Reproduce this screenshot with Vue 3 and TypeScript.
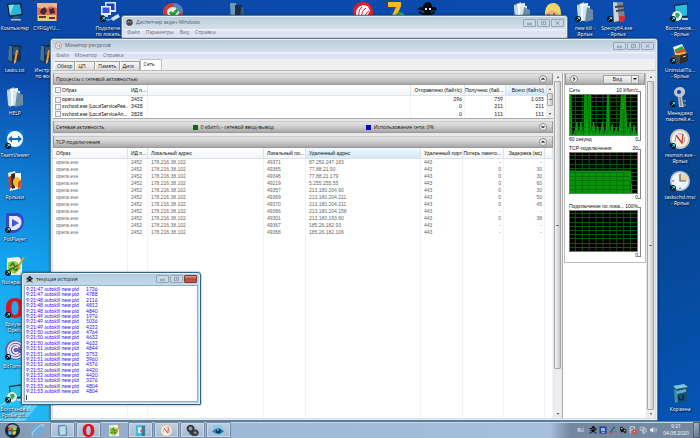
<script setup lang="ts">
import { ref } from 'vue'

interface Shape {
  d: string
  f?: string
  s?: string
  w?: number
}

interface DesktopItem {
  col: number
  row: number
  icon: string
  label: string
  link?: boolean
}

const art: Record<string, Shape[]> = {
  computer: [
    { d: 'M2 2 L16 1 L18 13 L4 15Z', f: '#0b1822' },
    { d: 'M3.500 3 L15 2.200 L16.600 12 L5 13.600Z', f: '#25b7dc' },
    { d: 'M3.500 3 L9 2.600 L5 13Z', f: '#7fe3f2' },
    { d: 'M9 14 H13 L15 18 H7Z', f: '#3b5468' },
    { d: 'M6 17 H16 V18.500 H6Z', f: '#a9c3d3' },
  ],
  photo: [
    { d: 'M0 1 H20 V19 H0Z', f: '#e26a50' },
    { d: 'M0 1 H20 V6 L13 4 L7 8 L0 5Z', f: '#f0b58c' },
    { d: 'M1 13 H19 V19 H1Z', f: '#dfc98d' },
    { d: 'M4 7 L8 5 L10 9 L7 13 L3 11Z M12 7 L17 6 L18 11 L13 12Z', f: '#3b2a33' },
    { d: 'M2 15 H9 M12 16 H18', s: '#6d3128', w: 2 },
  ],
  network: [
    { d: 'M5 0 H16 V10 H5Z', f: '#d9e7f7' },
    { d: 'M6.500 1.500 H14.500 V8 H6.500Z', f: '#213ec1' },
    { d: 'M1 4 H11 V13 H1Z', f: '#eaf2fb' },
    { d: 'M2.500 5.500 H9.500 V11 H2.500Z', f: '#3454dd' },
    { d: 'M4 13 H8 V15 H3Z', f: '#c5d3e2' },
    { d: 'M11 16 L18 12 L20 15 L13 19Z', f: '#cfe0ee' },
    { d: 'M3 16 Q8 20 13 16', s: '#9ed4ef', w: 1 },
  ],
  note: [
    { d: 'M4 1 H15 Q17 2 16 5 V17 L6 19 L3 17Z', f: '#17324f' },
    { d: 'M4 2 H7 V18 L3 16Z', f: '#3f739b' },
    { d: 'M8 3 H14 V10 L8 11Z', f: '#25527b' },
    { d: 'M12 6 L10 18', s: '#f39b2c', w: 2 },
    { d: 'M10 17 L9.500 19.500', s: '#f6dfb2', w: 1 },
  ],
  folder: [
    { d: 'M2 3 L9 0 L11 17 L4 20Z', f: '#9eb9c8' },
    { d: 'M5 2 L13 1 V17 L6 19Z', f: '#f5fafc' },
    { d: 'M8 3 L15 4 V18 L8 19Z', f: '#d7e4eb' },
    { d: 'M12 5 L18 8 V18 L10 20Z', f: '#6b8ca1' },
    { d: 'M2 3 L6 5 V20 L3 18Z', f: '#c3d9e4' },
  ],
  darkfolder: [
    { d: 'M3 1 H9 L11 19 L4 20Z', f: '#6e99b4' },
    { d: 'M8 3 H15 V18 L8 20Z', f: '#1b2d43' },
    { d: 'M14 5 L17 7 V17 L13 19Z', f: '#345a7e' },
  ],
  teamviewer: [
    { d: 'M1 1 H19 V19 H1Z', f: '#1370c8' },
    { d: 'M10 2 A8 8 0 1 1 9.990 2Z', f: '#f6fbff' },
    { d: 'M3 10 L7 6.500 V9 H13 V6.500 L17 10 L13 13.500 V11 H7 V13.500Z', f: '#136cc1' },
  ],
  shortcuts: [
    { d: 'M3 2 L10 0 L12 18 L5 20Z', f: '#e9f2f5' },
    { d: 'M3 6 L9 4 V16 L4 18Z', f: '#b74a32' },
    { d: 'M9 2 H16 V17 L9 19Z', f: '#f5f7f8' },
    { d: 'M6 3 L10 2 V17 L7 18Z', f: '#3a2a26' },
    { d: 'M12 6 A4 5 0 1 1 11.990 6Z', f: '#f2bd28' },
    { d: 'M13 11 L17 8 V16 L13 18Z', f: '#d94b2b' },
  ],
  pot: [
    { d: 'M1 0 H13 Q19 2 19 9 Q18 18 9 20 H4 Q1 19 1 15Z', f: '#3848c9' },
    { d: 'M4 3 H12 Q17 5 16.500 10 Q16 15 10 17 H4Z', f: '#e4eafc' },
    { d: 'M7 6 L14 10 L7 14Z', f: '#4156d4' },
  ],
  notepad: [
    { d: 'M2 2 L14 1 L17 5 V19 H2Z', f: '#edf2e6' },
    { d: 'M3 7 Q8 3 13 7 L16 12 L10 18 L3 15Z', f: '#92ce39' },
    { d: 'M5 10 L8 7 L10 11 L14 9 M4 14 L8 12 L11 15', s: '#3c6a2b', w: 1.5 },
    { d: 'M19 1 L12 13', s: '#d59a35', w: 2 },
    { d: 'M12.500 12 L11 15', s: '#392d20', w: 1 },
  ],
  opera: [
    { d: 'M10 0 C16 0 19 4 19 10 S16 20 10 20 S1 16 1 10 S4 0 10 0Z M10 3 C7 3 6.500 7 6.500 10 S7 17 10 17 S13.500 13 13.500 10 S13 3 10 3Z', f: '#dc1420' },
  ],
  bit: [
    { d: 'M10 0 A10 10 0 1 1 9.990 0Z', f: '#6861a8' },
    { d: 'M17 5 A8 8 0 1 0 17 15 M15 7 A5.500 5.500 0 1 0 15 13', s: '#e8e7f8', w: 1.700 },
    { d: 'M13 8 A3 3 0 1 0 13 12', s: '#fff', w: 1.300 },
  ],
  restore: [
    { d: 'M4 3 L18 1 V15 L5 16Z', f: '#122c39' },
    { d: 'M5 4 L17 2.500 V13.500 L6 14.500Z', f: '#28bde1' },
    { d: 'M7 9 A5 5 0 1 1 6.990 9Z', f: '#dff4e6' },
    { d: 'M5 12 Q8 9 10 13 L7 17Z', f: '#32a358' },
    { d: 'M12 16 H18 V18 H12Z', f: '#b8cbd4' },
  ],
  uninstall: [
    { d: 'M3 3 L12 0 L17 10 H5Z', f: '#e9f2f5' },
    { d: 'M4 6 L12 2 L18 10 H7Z', f: '#39a43d' },
    { d: 'M5 8 L14 5 L18 11 H8Z', f: '#e5472f' },
    { d: 'M4 10 L15 8 L18 12 H7Z', f: '#f2c23e' },
    { d: 'M2 11 H10 L18 9 V17 L10 20 H2Z', f: '#4d4a49' },
    { d: 'M10 11 L18 9 V17 L10 20Z', f: '#2d2b2c' },
    { d: 'M13 13 L16 12', s: '#d9c79f', w: 1 },
  ],
  key: [
    { d: 'M9 0 C14 -1 17 4 14 8 L12 10 L14 20 L9 20 L8 10 C2 8 3 1 9 0Z M9 3 A2 2 0 1 0 9.010 3Z', f: '#bdc4ca' },
    { d: 'M10 10 L11 19 M12 14 H16 M13 18 H16', s: '#7d858e', w: 1.500 },
  ],
  gauge: [
    { d: 'M10 0 A10 10 0 1 1 9.990 0Z', f: '#c9c5bc' },
    { d: 'M10 2 A8 8 0 1 1 9.990 2Z', f: '#f4f0e6' },
    { d: 'M5 13 L6 7 M8 5 L13 5 M15 8 L14 14', s: '#a59b93', w: 1 },
    { d: 'M6 6 L12 14 L13 5', s: '#cc3328', w: 1.300 },
  ],
  clock: [
    { d: 'M10 0 A10 10 0 1 1 9.990 0Z', f: '#aebecb' },
    { d: 'M10 1.500 A8.500 8.500 0 1 1 9.990 1.500Z', f: '#eef5f8' },
    { d: 'M10 2 A8 8 0 0 1 18 10 H10Z', f: '#ead7a2' },
    { d: 'M10 3 V10 H16', s: '#50647a', w: 1.200 },
    { d: 'M2 10 H4 M10 16 V18', s: '#50647a', w: 1 },
  ],
  bin: [
    { d: 'M3 3 L14 1 L18 4 L16 19 L5 20Z', f: '#17516f' },
    { d: 'M3 3 L14 1 L18 4 L6 6Z', f: '#7bc5de' },
    { d: 'M4 6 L7 7 L8 19 L5 20Z', f: '#3f91b2' },
    { d: 'M7 8 L16 6 V9 L7 11Z', f: '#65aeca' },
    { d: 'M9 13 A2.500 2.500 0 1 0 12 12', s: '#0a2a43', w: 1.500 },
  ],
  check: [
    { d: 'M10 1 C17 1 20 6 20 10 C20 16 16 20 10 20 C4 20 0 16 0 10 C0 5 4 1 10 1Z', f: '#d23b32' },
    { d: 'M10 1 C17 1 20 6 20 10 L13 14Z', f: '#4d83d1' },
    { d: 'M10 5 A6 5 0 1 1 9.990 5Z', f: '#e3eee2' },
    { d: 'M7 10 L10 13 L15 7', s: '#2ba02f', w: 3 },
  ],
  fan: [
    { d: 'M10 0 A10 10 0 1 1 9.990 0Z', f: '#e51c2a' },
    { d: 'M3 14 Q2 5 10 3 Q16 3 17 9 L14 14 L9 17Z', f: '#fff' },
    { d: 'M6 15 Q5 8 9 5 M9 15 Q8 9 13 6 M12 15 Q12 11 16 9', s: '#e51c2a', w: 1 },
  ],
  seven: [
    { d: 'M3 0 H16 V4 L9 20 H4 L11 5 H3Z', f: '#f3bd1e' },
    { d: 'M15 10 A5 5 0 1 1 14.990 10Z', f: '#2e9a68' },
    { d: 'M12 14 L18 12 L16 17Z', f: '#70cbe0' },
  ],
  skull: [
    { d: 'M0 7 Q4 4 6 5 Q7 0 11 0 Q15 0 15 5 Q19 4 20 8 L14 9 L13 14 H8 L7 9Z', f: '#080b10' },
    { d: 'M1 18 L18 10 M19 18 L2 10', s: '#080b10', w: 2 },
    { d: 'M8 6 H10 V8 H8Z M12 6 H14 V8 H12Z', f: '#e4e8ea' },
  ],
  blonde: [
    { d: 'M2 10 Q3 0 12 1 Q18 3 18 12 L20 18 L13 19 L2 17Z', f: '#efd36b' },
    { d: 'M2 12 L9 8 L15 11 L13 20 L3 18Z', f: '#e9ad82' },
    { d: 'M4 13 H7 M10 12 H12', s: '#362821', w: 1 },
  ],
  chip: [
    { d: 'M6 0 L16 0 L18 17 L7 20Z', f: '#7b858d' },
    { d: 'M6 0 L10 1 L12 19 L7 20Z', f: '#cdd2d6' },
    { d: 'M8 5 L17 4 M9 9 L17 8', s: '#3e464d', w: 2 },
    { d: 'M12 14 H18 L17 20 H12Z', f: '#d92f2a' },
  ],
  start: [
    { d: 'M10 0 A10 10 0 1 1 9.990 0Z', f: '#1b2938' },
    { d: 'M3 5 Q10 -2 17 5 Q10 9 3 5Z', f: '#9aa6b0' },
    { d: 'M5 6 L9 5 V10 L4 10Z', f: '#f06d25' },
    { d: 'M10 5 Q13 7 16 5 L15 10 H10Z', f: '#94d24e' },
    { d: 'M4 11 H9 V15 L5 16Z', f: '#4fb9ed' },
    { d: 'M10 11 H15 L14 15 L10 16Z', f: '#f7c63c' },
  ],
  ie: [
    { d: 'M16 14 A7 7 0 1 1 17 10 H6', s: '#5db4e4', w: 3 },
    { d: 'M3 18 Q-1 17 6 9 Q15 0 19 1 Q20 2 18 5', s: '#b2e3f6', w: 1.500 },
  ],
  explorer: [
    { d: 'M3 2 L14 1 L17 4 V18 L6 19 L3 17Z', f: '#5f8fad' },
    { d: 'M5 4 L15 3 V16 L6 17Z', f: '#b8d9e9' },
  ],
  book: [
    { d: 'M3 2 H13 V18 L3 19Z', f: '#40b9df' },
    { d: 'M6 5 H12 V14 H6Z', f: '#d8f3fc' },
    { d: 'M12 3 L17 2 V18 L12 19Z', f: '#347e9d' },
    { d: 'M10 8 H13 V13 H10Z', f: '#d45742' },
  ],
  gears: [
    { d: 'M7 1 A6 6 0 1 1 6.990 1Z', f: '#2d343b' },
    { d: 'M7 4 A3 3 0 1 1 6.990 4Z', f: '#929ba3' },
    { d: 'M14 8 A5.500 5.500 0 1 1 13.990 8Z', f: '#333b41' },
    { d: 'M14 11 A2.500 2.500 0 1 1 13.990 11Z', f: '#8c949b' },
    { d: 'M6 12 L12 17', s: '#343b42', w: 5 },
  ],
  eye: [
    { d: 'M2 2 H15 L18 16 H4Z', f: '#7ccbe8' },
    { d: 'M0 11 Q9 3 19 11 Q9 19 0 11Z', f: '#1c86bd' },
    { d: 'M10 7 A4 4 0 1 1 9.990 7Z', f: '#0d3c5e' },
    { d: 'M8 8 H10 V10 H8Z', f: '#fff' },
  ],
  monitor: [
    { d: 'M1 1 H19 V19 H1Z', f: '#25439d' },
    { d: 'M5 5 H15 V13 H5Z', f: '#9bb5df' },
    { d: 'M7 16 H14', s: '#d8e3fa', w: 2 },
  ],
  pens: [
    { d: 'M2 18 L14 2', s: '#2354d1', w: 4 },
    { d: 'M5 18 L18 5', s: '#45b34c', w: 4 },
    { d: 'M2 18 L18 12', s: '#e3462f', w: 3 },
  ],
  cow: [
    { d: 'M2 4 L8 1 L12 6 L18 9 V16 L14 18 L11 14 L7 17 L3 12Z', f: '#15191e' },
    { d: 'M4 6 L8 4 L9 8Z M12 9 L16 11 L14 14Z', f: '#f4f5f5' },
  ],
  flag: [
    { d: 'M3 1 V19 M4 2 H14 V10 H4', s: '#e6edf5', w: 2 },
    { d: 'M14 8 A6 6 0 1 1 13.990 8Z', f: '#dc4031' },
    { d: 'M12 12 L16 16 M16 12 L12 16', s: '#fff', w: 1.500 },
  ],
  lan: [
    { d: 'M3 3 H13 V11 H3Z M9 7 H18 V15 H9Z', f: '#7688a0', s: '#e0e7ef', w: 1.500 },
    { d: 'M8 18 H15', s: '#e0e7ef', w: 2 },
  ],
  speaker: [
    { d: 'M3 7 H7 L11 3 V17 L7 13 H3Z', f: '#f3f6f9' },
    { d: 'M14 6 Q17 10 14 14 M17 4 Q21 10 17 16', s: '#dbe4ee', w: 1.300 },
  ],
}

const items: DesktopItem[] = [
  { col: 1, row: 1, icon: 'computer', label: 'Компьютер' },
  { col: 1, row: 2, icon: 'note', label: 'tasks.txt' },
  { col: 1, row: 3, icon: 'folder', label: 'HELP' },
  { col: 1, row: 4, icon: 'teamviewer', label: 'TeamViewer', link: true },
  { col: 1, row: 5, icon: 'shortcuts', label: 'Ярлыки' },
  { col: 1, row: 6, icon: 'pot', label: 'PotPlayer', link: true },
  { col: 1, row: 7, icon: 'notepad', label: 'Notepad++', link: true },
  { col: 1, row: 8, icon: 'opera', label: 'Браузер\nOpera', link: true },
  { col: 1, row: 9, icon: 'bit', label: 'BitTorrent', link: true },
  { col: 1, row: 10, icon: 'restore', label: 'Восстанов...\nЯрлык 35...', link: true },
  { col: 2, row: 1, icon: 'photo', label: 'CYFiGyYU...' },
  { col: 2, row: 2, icon: 'note', label: 'Инструк...\nпо восс...' },
  { col: 4, row: 1, icon: 'network', label: 'Подключе...\nпо локаль...', link: true },
  { col: 6, row: 1, icon: 'check', label: '' },
  { col: 8, row: 1, icon: 'darkfolder', label: '' },
  { col: 12, row: 1, icon: 'fan', label: '' },
  { col: 13, row: 1, icon: 'seven', label: '' },
  { col: 14, row: 1, icon: 'skull', label: '' },
  { col: 17, row: 1, icon: 'folder', label: '' },
  { col: 18, row: 1, icon: 'blonde', label: '' },
  { col: 19, row: 1, icon: 'folder', label: 'new kill -\nЯрлык', link: true },
  { col: 20, row: 1, icon: 'chip', label: 'Speccy64.exe\n- Ярлык', link: true },
  { col: 22, row: 1, icon: 'restore', label: 'Восстанов...\n- Ярлык', link: true },
  { col: 22, row: 2, icon: 'uninstall', label: 'UninstallTo...\n- Ярлык', link: true },
  { col: 22, row: 3, icon: 'key', label: 'Менеджер\nпаролей.e...', link: true },
  { col: 22, row: 4, icon: 'gauge', label: 'resmon.exe -\nЯрлык', link: true },
  { col: 22, row: 5, icon: 'clock', label: 'taskschd.msc\n- Ярлык', link: true },
  { col: 22, row: 10, icon: 'bin', label: 'Корзина' },
]

const tabs = ['Обзор', 'ЦП', 'Память', 'Диск', 'Сеть']
const active = ref('Сеть')

const processes = [
  { name: 'opera.exe', pid: '2452', out: '296', inn: '759', sum: '1 055' },
  { name: 'svchost.exe (LocalServicePee...', pid: '3428', out: '0', inn: '211', sum: '211' },
  { name: 'svchost.exe (LocalServiceAn...', pid: '2828', out: '0', inn: '111', sum: '111' },
]

const connections: string[][] = [
  ['49371', '87.250.247.183', '-', '-'],
  ['49365', '77.88.21.90', '0', '30'],
  ['49346', '77.88.21.179', '0', '30'],
  ['49219', '5.255.255.55', '0', '60'],
  ['49357', '213.180.204.90', '0', '30'],
  ['49369', '213.180.204.211', '0', '50'],
  ['49370', '213.180.204.211', '0', '45'],
  ['49366', '213.180.204.158', '-', '-'],
  ['49301', '213.180.193.60', '0', '38'],
  ['49367', '185.26.182.93', '-', '-'],
  ['49368', '185.26.182.106', '-', '-'],
]

const charts = [
  {
    title: 'Сеть',
    max: '10 Кбит/с',
    foot: '60 секунд',
    area: 'M0 42 V0 H2 L3 42 L6 38 L8 28 L10 42 L12 28 L14 42 L15 42 L16 0 H18 L18 42 L20 0 H22 L22 42 L25 28 L27 42 L29 32 L31 42 L34 28 L36 42 L38 33 L39 0 H40 L41 42 L44 30 L45 42 L48 33 L50 42 L52 28 L53 0 H54 L55 15 L56 0 H57 L59 42 L62 28 L64 42 L66 31 L68 42 L70 36 V42Z',
  },
  { title: 'TCP-подключения', max: '20', foot: '', area: 'M0 42 V19 H62 L64 42Z' },
  { title: 'Подключение по лока...', max: '100%', foot: '', area: '' },
]
const vLines = [7, 14, 21, 28, 35, 42, 49, 56, 63]
const hLines = [4, 8, 13, 17, 21, 25, 29, 34, 38]

const log: string[][] = [
  ['9:21:47', '1736'], ['9:21:47', '4788'], ['9:21:48', '2116'], ['9:21:48', '4812'], ['9:21:48', '4840'],
  ['9:21:49', '1976'], ['9:21:49', '5036'], ['9:21:49', '4252'], ['9:21:50', '4764'], ['9:21:50', '4632'],
  ['9:21:50', '4632'], ['9:21:51', '4844'], ['9:21:51', '3752'], ['9:21:51', '3960'], ['9:21:52', '4576'],
  ['9:21:52', '4420'], ['9:21:52', '4420'], ['9:21:53', '3276'], ['9:21:53', '4804'], ['9:21:53', '4804'],
]

const apps = ['opera', 'notepad', 'book', 'gauge', 'gears', 'eye']
const tray = ['skull', 'monitor', 'pens', 'cow', 'flag', 'lan', 'speaker']
const controls = [
  { name: 'Свернуть', d: 'M3 5 H9 V7 H3Z' },
  { name: 'Развернуть', d: 'M3 2 H9 V7 H3Z M5 4 H7 V5 H5Z' },
  { name: 'Закрыть', d: 'M3 2 L9 7 M9 2 L3 7' },
]
</script>

<template>
  <div class="desktop">
    <svg class="rays" viewBox="0 0 60 60" aria-hidden="true">
      <path d="M0 44 L60 8 M0 58 L60 24 M14 60 L54 20" stroke="#d8f5ff" stroke-width="1" opacity=".7" />
      <path d="M0 60 L50 28 L24 60Z" fill="#c4efff" opacity=".4" />
    </svg>
    <div class="icons">
      <a
        v-for="(it, i) in items"
        :key="i"
        href="#"
        class="item"
        :aria-label="it.label || it.icon"
        :style="{ gridColumn: it.col, gridRow: it.row }"
      >
        <svg class="pic" viewBox="0 0 20 20" aria-hidden="true">
          <path v-for="(p, k) in art[it.icon]" :key="k" :d="p.d" :fill="p.f || 'none'" :stroke="p.s || 'none'" :stroke-width="p.w" fill-rule="evenodd" />
          <g v-if="it.link">
            <circle cx="3" cy="17" r="3" fill="#061018" />
            <path d="M1.500 18.500 L4.500 15.500 M2.500 15.500 H4.500 V17.500" stroke="#3fd0e0" fill="none" />
          </g>
        </svg>
        <span class="label">{{ it.label }}</span>
      </a>
    </div>

    <section class="window taskman" aria-label="Диспетчер задач Windows">
      <header class="title">
        <svg class="badge" viewBox="0 0 20 20" aria-hidden="true">
          <circle cx="10" cy="10" r="9" fill="#343a40" />
          <path d="M4 12 L8 6 L12 10 L16 7" stroke="#d6e0e4" stroke-width="2" fill="none" />
          <circle cx="10" cy="14" r="3" fill="#a34239" />
        </svg>
        <h2>Диспетчер задач Windows</h2>
        <div class="controls">
          <button v-for="c in controls" :key="c.name" type="button" :aria-label="c.name">
            <svg viewBox="0 0 12 9"><path :d="c.d" /></svg>
          </button>
        </div>
      </header>
      <nav class="menu">
        <button type="button">Файл</button><button type="button">Параметры</button><button type="button">Вид</button><button type="button">Справка</button>
      </nav>
      <div class="client"></div>
    </section>

    <section class="window resmon" aria-label="Монитор ресурсов">
      <header class="title">
        <svg class="badge" viewBox="0 0 20 20" aria-hidden="true">
          <circle cx="10" cy="10" r="9" fill="#f4eeee" stroke="#9c8584" stroke-width="2" />
          <path d="M5 6 L13 14 L14 6" stroke="#c7473f" stroke-width="2" fill="none" />
        </svg>
        <h2>Монитор ресурсов</h2>
        <div class="controls">
          <button v-for="c in controls" :key="c.name" type="button" :aria-label="c.name">
            <svg viewBox="0 0 12 9"><path :d="c.d" /></svg>
          </button>
        </div>
      </header>
      <nav class="menu">
        <button type="button">Файл</button><button type="button">Монитор</button><button type="button">Справка</button>
      </nav>
      <div class="tabs" role="tablist">
        <button
          v-for="t in tabs"
          :key="t"
          type="button"
          role="tab"
          :aria-selected="t === active"
          :class="{ on: t === active }"
          @click="active = t"
        >{{ t }}</button>
      </div>

      <div class="body">
        <div class="main">
          <div class="bar">
            <h3>Процессы с сетевой активностью</h3>
            <button type="button" class="round" aria-label="Свернуть раздел"><svg viewBox="0 0 8 8"><path d="M2 5 L4 3 L6 5" /></svg></button>
          </div>
          <div class="procs">
            <table>
              <colgroup><col class="c-name" /><col class="c-pid" /><col /><col class="c-out" /><col class="c-num" /><col class="c-num" /></colgroup>
              <thead>
                <tr>
                  <th><label><input type="checkbox" />Образ</label></th>
                  <th>ИД п...</th>
                  <th></th>
                  <th class="r">Отправлено (байт/с)</th>
                  <th class="r">Получено (бай...</th>
                  <th class="r sorted">Всего (байт/с)</th>
                </tr>
              </thead>
              <tbody>
                <tr v-for="p in processes" :key="p.pid">
                  <td><label><input type="checkbox" />{{ p.name }}</label></td>
                  <td>{{ p.pid }}</td>
                  <td></td>
                  <td class="r">{{ p.out }}</td>
                  <td class="r">{{ p.inn }}</td>
                  <td class="r">{{ p.sum }}</td>
                </tr>
              </tbody>
            </table>
            <div class="scroll small"><i class="up"></i><b></b><i class="down"></i></div>
          </div>
          <div class="bar net">
            <h3>Сетевая активность</h3>
            <span class="legend"><i class="green"></i>0 кбит/с - сетевой ввод-вывод</span>
            <span class="legend"><i class="blue"></i>Использование сети: 0%</span>
            <button type="button" class="round" aria-label="Развернуть раздел"><svg viewBox="0 0 8 8"><path d="M2 3 L4 5 L6 3" /></svg></button>
          </div>
          <div class="bar">
            <h3>TCP-подключения</h3>
            <button type="button" class="round" aria-label="Свернуть раздел"><svg viewBox="0 0 8 8"><path d="M2 5 L4 3 L6 5" /></svg></button>
          </div>
          <div class="conns">
            <table>
              <colgroup>
                <col class="c-name" /><col class="c-pid" /><col class="c-local" /><col class="c-port" /><col /><col class="c-port" /><col class="c-num" /><col class="c-num" /><col class="c-rest" />
              </colgroup>
              <thead>
                <tr>
                  <th>Образ</th>
                  <th>ИД п...</th>
                  <th>Локальный адрес</th>
                  <th>Локальный по...</th>
                  <th class="sorted">Удаленный адрес</th>
                  <th>Удаленный порт</th>
                  <th class="r">Потерь пакето...</th>
                  <th class="r">Задержка (мс)</th>
                  <th></th>
                </tr>
              </thead>
              <tbody>
                <tr v-for="c in connections" :key="c[0]">
                  <td>opera.exe</td>
                  <td>2452</td>
                  <td>178.216.38.102</td>
                  <td>{{ c[0] }}</td>
                  <td>{{ c[1] }}</td>
                  <td>443</td>
                  <td class="r">{{ c[2] }}</td>
                  <td class="r">{{ c[3] }}</td>
                  <td></td>
                </tr>
                <tr class="fill"><td v-for="n in 9" :key="n"></td></tr>
              </tbody>
            </table>
          </div>
        </div>
        <div class="scroll long"><i class="up"></i><b></b><s></s><i class="down"></i></div>
        <div class="side">
          <div class="panel">
            <div class="bar">
              <button type="button" class="round" aria-label="Скрыть графики"><svg viewBox="0 0 8 8"><path d="M3 2 L5 4 L3 6" /></svg></button>
              <button type="button" class="view"><span>Вид</span><i></i></button>
            </div>
            <div class="charts">
              <figure v-for="c in charts" :key="c.title">
                <figcaption><span>{{ c.title }}</span><span>{{ c.max }}</span></figcaption>
                <svg class="graph" viewBox="0 0 70 42" preserveAspectRatio="none" aria-hidden="true">
                  <rect width="70" height="42" fill="#000" />
                  <path :d="c.area" fill="#058a08" />
                  <g stroke="#075c0b" stroke-width="1">
                    <line v-for="x in vLines" :key="'v' + x" :x1="x - 0.5" :x2="x - 0.5" y1="0" y2="42" />
                    <line v-for="y in hLines" :key="'h' + y" x1="0" x2="70" :y1="y - 0.5" :y2="y - 0.5" />
                  </g>
                  <path :d="c.area" fill="#08c410" fill-opacity=".2" stroke="#0cc416" stroke-opacity=".6" />
                </svg>
                <div class="foot"><span>{{ c.foot }}</span><span>0</span></div>
              </figure>
            </div>
          </div>
        </div>
        <div class="scroll"><i class="up"></i><b></b><i class="down"></i></div>
      </div>
    </section>

    <section class="window history" aria-label="текущая история">
      <header class="title">
        <svg class="badge" viewBox="0 0 20 20" aria-hidden="true">
          <path v-for="(p, k) in art.skull" :key="k" :d="p.d" :fill="p.f || 'none'" :stroke="p.s || 'none'" :stroke-width="p.w" />
        </svg>
        <h2>текущая история</h2>
        <div class="controls">
          <button v-for="c in controls" :key="c.name" type="button" :aria-label="c.name">
            <svg viewBox="0 0 12 9"><path :d="c.d" /></svg>
          </button>
        </div>
      </header>
      <ol class="log">
        <li v-for="(l, i) in log" :key="i"><span>{{ l[0] }} autokill new pid</span><span>{{ l[1] }}</span></li>
        <li><i class="caret"></i></li>
      </ol>
    </section>

    <footer class="taskbar">
      <button type="button" class="plain start" aria-label="Пуск">
        <svg viewBox="0 0 20 20"><path v-for="(p, k) in art.start" :key="k" :d="p.d" :fill="p.f" /></svg>
      </button>
      <button type="button" class="plain" aria-label="Internet Explorer">
        <svg viewBox="0 0 20 20"><path v-for="(p, k) in art.ie" :key="k" :d="p.d" fill="none" :stroke="p.s" :stroke-width="p.w" /></svg>
      </button>
      <button type="button" class="app stack" aria-label="Проводник">
        <svg viewBox="0 0 20 20"><path v-for="(p, k) in art.explorer" :key="k" :d="p.d" :fill="p.f" /></svg>
      </button>
      <button v-for="a in apps" :key="a" type="button" class="app" :class="{ idle: a === 'notepad' }" :aria-label="a">
        <svg viewBox="0 0 20 20">
          <path v-for="(p, k) in art[a]" :key="k" :d="p.d" :fill="p.f || 'none'" :stroke="p.s || 'none'" :stroke-width="p.w" fill-rule="evenodd" />
        </svg>
      </button>
      <div class="tray">
        <span class="lang">RU</span>
        <svg v-for="a in tray" :key="a" viewBox="0 0 20 20" aria-hidden="true">
          <path v-for="(p, k) in art[a]" :key="k" :d="p.d" :fill="p.f || 'none'" :stroke="p.s || 'none'" :stroke-width="p.w" />
        </svg>
        <time><span>9:21</span><span>04.08.2020</span></time>
        <button type="button" class="peek" aria-label="Показать рабочий стол"></button>
      </div>
    </footer>
  </div>
</template>

<style>
body {
  overflow: hidden;
}
</style>

<style scoped>
* {
  box-sizing: border-box;
}
.desktop {
  position: relative;
  height: 100vh;
  overflow: hidden;
  display: flex;
  flex-direction: column;
  justify-content: flex-end;
  font: 5px/7px "Open Sans", "Noto Sans", sans-serif;
  color: #111;
  background:
    radial-gradient(ellipse 34% 75% at 0% 92%, #2cc4f5 0%, #12a2ee 45%, rgba(10, 110, 215, 0) 100%),
    linear-gradient(160deg, #0b48a6 0%, #0a4db0 40%, #07448f 62%, #0556b8 100%);
}
button {
  font: inherit;
  color: inherit;
  margin: 0;
  padding: 0;
  border: 0;
  background: none;
}
h2, h3 {
  margin: 0;
  font: inherit;
  white-space: nowrap;
}
.rays {
  position: absolute;
  left: 0;
  bottom: 16px;
  width: 60px;
  height: 60px;
}
.icons {
  position: absolute;
  inset: 2px 4px 13px -1px;
  display: grid;
  grid-template-columns: repeat(22, minmax(0, 1fr));
  grid-template-rows: repeat(10, minmax(0, 1fr));
}
.item {
  display: flex;
  flex-direction: column;
  align-items: center;
  gap: 3px;
  color: #fff;
  text-decoration: none;
}
.pic {
  width: 20px;
  height: 20px;
  flex: none;
}
.label {
  white-space: pre;
  text-align: center;
  line-height: 6px;
  text-shadow: 0 0 2px #001a3c, 1px 1px 1px #001a3c;
}
.window {
  position: absolute;
  display: flex;
  flex-direction: column;
  padding: 0 2px 2px;
  border: 1px solid #5e7890;
  border-radius: 3px 3px 1px 1px;
  background: linear-gradient(#bccbda, #d3e0ec 13px, #cfdfee);
  box-shadow: inset 0 0 0 1px #e6eff7, 0 0 2px rgba(0, 20, 50, .6);
}
.title {
  display: flex;
  align-items: center;
  gap: 3px;
  height: 13px;
  flex: none;
  padding: 0 1px 0 2px;
  color: #4e5964;
}
.badge {
  width: 7px;
  height: 7px;
}
.controls {
  display: flex;
  gap: 1px;
  margin-left: auto;
}
.controls button {
  width: 13px;
  height: 8px;
  display: flex;
  border: 1px solid #94a5b6;
  border-radius: 1px;
  background: #cbd8e5;
}
.controls svg {
  width: 100%;
  height: 100%;
}
.controls path {
  fill: #f8fbfe;
  stroke: #66788c;
  stroke-width: 1;
  fill-rule: evenodd;
}
.menu {
  display: flex;
  gap: 6px;
  height: 7px;
  flex: none;
  padding: 0 3px;
  color: #6c7179;
  background: linear-gradient(#f3f5fb, #dbe1f3 40%, #dfe5f5);
}
.client {
  flex: 1;
  background: #eceef2;
}
.taskman {
  left: 121px;
  top: 15px;
  right: 132px;
  height: 60px;
}
.resmon {
  left: 50px;
  top: 38px;
  right: 42px;
  bottom: 17px;
}
.tabs {
  display: flex;
  align-items: flex-end;
  height: 12px;
  flex: none;
  padding: 0 1px;
  background: #f0f0f0;
  border-bottom: 1px solid #b9b9b9;
}
.tabs button {
  height: 9px;
  min-width: 20px;
  padding: 0 2px;
  text-align: left;
  border: 1px solid #a2a2a2;
  border-left-color: #fafafa;
  border-bottom: 0;
  background: linear-gradient(#f6f6f6, #dcdcdc);
}
.tabs button.on {
  height: 11px;
  min-width: 22px;
  padding: 0 3px 1px;
  background: #fff;
  border-color: #c0c0c0;
}
.body {
  flex: 1;
  min-height: 0;
  display: flex;
  background: #e9e9ea;
  padding-top: 2px;
}
.main {
  flex: 1;
  min-width: 0;
  display: flex;
  flex-direction: column;
}
.bar {
  display: flex;
  align-items: center;
  height: 12px;
  flex: none;
  padding: 0 5px 0 2px;
  border: 1px solid #999;
  border-top-color: #c8c8c8;
  background: linear-gradient(#e4e4e4, #cfcfcf 45%, #a8a8a8);
}
.round {
  display: flex;
  width: 8px;
  height: 8px;
  margin-left: auto;
  flex: none;
  border: 1px solid #8e8e8e;
  border-radius: 50%;
  background: #f1f1f1;
}
.round path {
  fill: none;
  stroke: #333;
  stroke-width: 1.500;
}
.procs {
  display: flex;
  height: 34px;
  flex: none;
  margin-bottom: 2px;
  overflow: hidden;
  background: #fff;
  border-bottom: 1px solid #aaa;
}
.net {
  margin-bottom: 3px;
}
.net h3 {
  width: 138px;
}
.legend {
  display: flex;
  align-items: center;
  gap: 3px;
  width: 175px;
  white-space: nowrap;
}
.legend i {
  width: 5px;
  height: 5px;
}
.green {
  background: #086c0c;
}
.blue {
  background: #0808c4;
}
table {
  flex: 1;
  width: 100%;
  table-layout: fixed;
  border-collapse: separate;
  border-spacing: 0;
  font-family: "Liberation Sans", sans-serif;
}
.c-name { width: 75px; }
.c-pid { width: 20px; }
.c-out { width: 54px; }
.c-num { width: 41px; }
.c-local { width: 116px; }
.c-port { width: 42px; }
.c-rest { width: 8px; }
th, td {
  padding: 0 0 0 3px;
  height: 7px;
  line-height: 7px;
  font-weight: 400;
  text-align: left;
  white-space: nowrap;
  overflow: hidden;
  border-right: 1px solid #f0f4fa;
}
th {
  height: 11px;
  border-right-color: #dde3ea;
  border-bottom: 1px solid #dfe3e8;
  background: linear-gradient(#fff, #f4f5f7);
}
th.sorted {
  background: linear-gradient(#f1f9fe, #cfeafa);
}
th.r, td.r {
  padding: 0 2px 0 0;
  text-align: right;
}
.procs tbody {
  font-family: Lato, "Liberation Sans", sans-serif;
}
.procs label {
  display: flex;
  align-items: center;
  gap: 1px;
}
.procs td:first-child, .procs th:first-child {
  padding-left: 2px;
  border-right: 0;
}
input {
  appearance: none;
  width: 6px;
  height: 6px;
  margin: 0;
  flex: none;
  border: 1px solid #a6abb0;
  background: #f2f4f5;
}
.conns {
  flex: 1;
  min-height: 0;
  display: flex;
  background: #fff;
  color: #666;
}
.conns table {
  height: 100%;
}
.conns th {
  color: #111;
}
.fill td {
  height: auto;
}
.scroll {
  width: 7px;
  flex: none;
  display: flex;
  flex-direction: column;
  align-items: center;
  margin: 0 1px;
  background: #ededed;
}
.scroll b {
  flex: 7;
  width: 100%;
  border: 1px solid #a5a5a5;
  border-radius: 1px;
  background:
    linear-gradient(#777, #777) center / 3px 1px no-repeat,
    linear-gradient(90deg, #f4f4f4, #c8c8cb);
}
.scroll s {
  flex: 1;
}
.scroll i {
  width: 0;
  height: 0;
  margin: 3px 0;
  border: 1px solid transparent;
}
.scroll .up {
  border-bottom: 2px solid #333;
  border-top: 0;
}
.scroll .down {
  border-top: 2px solid #333;
  border-bottom: 0;
}
.scroll.small {
  width: 6px;
  margin: 0;
}
.scroll.small b {
  flex: 0 0 13px;
}
.scroll.small .down {
  margin-top: auto;
}
.side {
  width: 84px;
  flex: none;
  padding: 0 0 0 1px;
  border-left: 1px solid #aaa;
  background: #fff;
}
.panel {
  border: 1px solid #bbb;
  border-top: 0;
}
.side .bar .round {
  margin: 0 auto 0 2px;
}
.view {
  display: flex;
  align-items: center;
  height: 9px;
  width: 36px;
  border: 1px solid #a0a0a0;
  background: linear-gradient(#f5f5f5, #dadada);
}
.view span {
  flex: 1;
  border-right: 1px solid #aaa;
}
.view i {
  margin: 0 1px;
  border: 2px solid transparent;
  border-top-color: #111;
  border-bottom: 0;
}
.charts {
  padding: 2px 3px 1px 4px;
}
figure {
  margin: 0;
  padding-right: 4px;
  height: 58px;
  background:
    linear-gradient(#888, #888) right 1px top 4px / 1px 50px no-repeat,
    linear-gradient(#888, #888) right 1px top 4px / 3px 1px no-repeat,
    linear-gradient(#888, #888) right 1px top 53px / 3px 1px no-repeat;
}
figcaption, .foot {
  display: flex;
  justify-content: space-between;
  height: 7px;
  white-space: nowrap;
  font-family: "Liberation Sans", sans-serif;
}
.graph {
  display: block;
  width: 100%;
  height: 42px;
  outline: 1px solid #777;
  outline-offset: -1px;
}
.history {
  left: 21px;
  bottom: 33px;
  width: 180px;
  height: 133px;
  border-color: #2c6484;
  background: linear-gradient(#b3cbe0, #c4daec 13px, #b9d7ea);
}
.history .title {
  height: 12px;
  color: #1d2730;
}
.history .controls button:last-child {
  background: linear-gradient(#e0a090, #c4432e 50%, #cf5a42);
  border-color: #7c3a36;
}
.log {
  flex: 1;
  display: grid;
  grid-auto-rows: minmax(0, 1fr);
  margin: 0;
  padding: 1px;
  list-style: none;
  border: 1px solid #8fb0c8;
  background: #fff;
  color: #3008f0;
  font-family: Lato, "Liberation Sans", sans-serif;
  line-height: 5px;
}
.log li {
  display: grid;
  grid-template-columns: 60px 1fr;
  white-space: nowrap;
}
.caret {
  width: 1px;
  height: 5px;
  background: #444;
}
.taskbar {
  position: relative;
  display: flex;
  align-items: stretch;
  height: 17px;
  flex: none;
  border-top: 1px solid #5f8195;
  background: linear-gradient(90deg, #7d92ad 0, #8ea6c2 50px, #9db7d6 200px, #a5bfdd 550px, #74889f 570px, #74889f 100%);
  box-shadow: inset 0 1px 0 #c3d6e8;
}
.taskbar svg {
  width: 13px;
  height: 13px;
}
.plain, .app {
  display: flex;
  align-items: center;
  justify-content: center;
  width: 25px;
}
.start svg {
  width: 15px;
  height: 15px;
}
.app {
  margin-right: 1px;
  border: 1px solid #7389a3;
  border-radius: 1px;
  background: linear-gradient(#c0cfe0, #a4b9d1);
  box-shadow: inset 0 0 0 1px #cbd9e8;
}
.app.idle {
  border-color: transparent;
  background: none;
  box-shadow: none;
}
.taskbar .tray {
  display: flex;
  align-items: center;
  gap: 2px;
  margin-left: auto;
  color: #fff;
}
.taskbar .tray svg {
  width: 8px;
  height: 8px;
}
.lang {
  margin-right: 3px;
}
.tray time {
  display: flex;
  flex-direction: column;
  align-items: center;
  width: 34px;
}
.peek {
  align-self: stretch;
  width: 7px;
  margin-left: -2px;
  border: 1px solid #4e6074;
  background: linear-gradient(135deg, #a5b5c6, #62758b);
}
</style>
